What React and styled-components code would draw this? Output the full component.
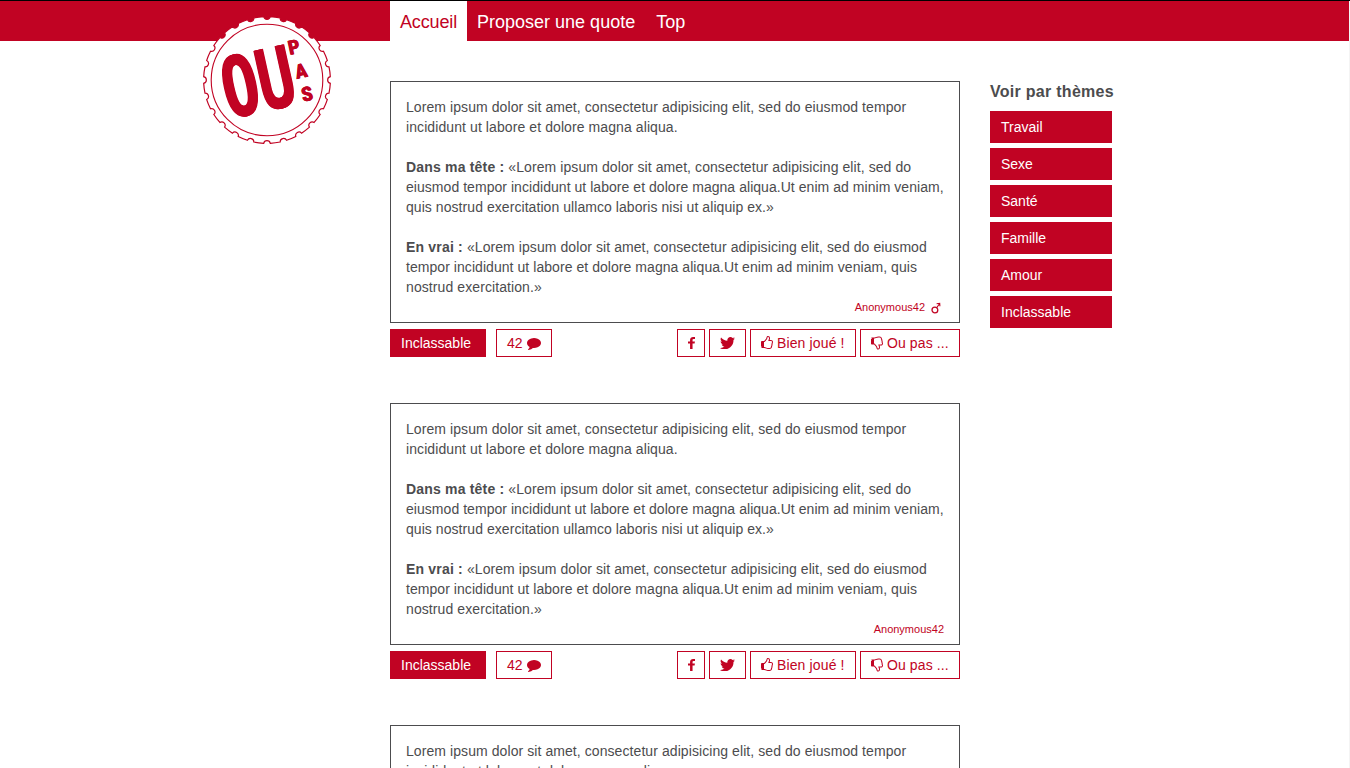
import React from "react";
import styled, { createGlobalStyle } from "styled-components";

const RED = "#c10323";
const INK = "#4c4c4e";

const Global = createGlobalStyle`
  * { box-sizing: border-box; }
  html, body { margin: 0; height: 768px; overflow: hidden; background: #fff; }
  body {
    font-family: "Liberation Sans", Arial, Helvetica, sans-serif;
    font-size: 14px;
    line-height: 20px;
    color: ${INK};
  }
`;

const Page = styled.div`
  height: 768px;
  overflow: hidden;
  border-top: 1px solid #000;
`;

const Frame = styled.div`
  position: relative;
  height: 100%;
  border-right: 1px solid #f4f4f4;
`;

const Header = styled.header`
  height: 40px;
  padding-left: 390px;
  background: ${RED};
`;

const Nav = styled.nav`
  display: flex;
  height: 40px;
`;

const NavLink = styled.a`
  padding: 0 10px;
  font-size: 18px;
  line-height: 42px;
  letter-spacing: ${(p) => p.$track || 0}px;
  color: ${(p) => (p.$active ? RED : "#fff")};
  background: ${(p) => (p.$active ? "#fff" : "transparent")};
  margin-right: ${(p) => p.$gap || 0}px;
`;

const LogoBadge = styled.a`
  position: absolute;
  left: 202px;
  top: 14px;
  width: 130px;
  height: 130px;
`;

const Seal = styled.svg`
  display: block;
`;

const LogoWord = styled.span`
  position: absolute;
  left: 5.5px;
  top: 17.5px;
  width: 100px;
  font-family: "DejaVu Sans Mono", monospace;
  font-weight: 700;
  font-size: 84px;
  line-height: 100px;
  letter-spacing: -1px;
  white-space: nowrap;
  color: ${RED};
  transform: rotate(-12.5deg) scaleX(0.73);
  text-shadow: 0.8px 0 ${RED}, -0.8px 0 ${RED};
`;

const LogoLetter = styled.span`
  position: absolute;
  left: ${(p) => p.$x - 10}px;
  top: ${(p) => p.$y - 10}px;
  width: 20px;
  text-align: center;
  font-family: Roboto, "Liberation Sans", sans-serif;
  font-weight: 900;
  font-size: 20px;
  line-height: 20px;
  color: ${RED};
  transform: rotate(-12deg) scaleX(0.85);
  text-shadow: 0.5px 0 ${RED}, -0.5px 0 ${RED};
`;

const Columns = styled.div`
  display: grid;
  grid-template-columns: 570px 130px;
  column-gap: 30px;
  padding: 40px 0 0 390px;
`;

const Post = styled.article`
  margin-bottom: 46px;
`;

const Quote = styled.div`
  height: 242px;
  padding: 15px 15px 5px;
  border: 1px solid ${INK};
`;

const Paragraph = styled.p`
  margin: 0 0 ${(p) => (p.$last ? 0 : 20)}px;
`;

const Line = styled.span`
  display: block;
  white-space: nowrap;
  letter-spacing: ${(p) => p.$track}px;
`;

const Lead = styled.b`
  letter-spacing: 0.19px;
`;

const Author = styled.div`
  display: flex;
  justify-content: flex-end;
  align-items: center;
  font-size: 11px;
  color: ${RED};
`;

const Gender = styled.svg`
  margin: 2px 3px 0 6px;
`;

const Actions = styled.div`
  display: flex;
  margin-top: 6px;
  gap: 4px;
`;

const Button = styled.a`
  display: flex;
  align-items: center;
  width: ${(p) => p.$w}px;
  height: 28px;
  padding: 0 0 0 10px;
  border: 1px solid ${RED};
  color: ${(p) => (p.$solid ? "#fff" : RED)};
  background: ${(p) => (p.$solid ? RED : "#fff")};
  letter-spacing: ${(p) => p.$track || 0}px;
  white-space: pre;
`;

const Left = styled.div`
  display: flex;
  gap: 10px;
  margin-right: auto;
`;

const Glyph = styled.svg`
  fill: ${RED};
  flex: none;
  margin-right: ${(p) => p.$after || 0}px;
  margin-left: ${(p) => p.$before || 0}px;
`;

const Title = styled.h2`
  margin: 0 0 9px;
  padding-top: 1px;
  font-size: 16px;
  line-height: 20px;
  letter-spacing: 0.28px;
  white-space: nowrap;
`;

const Theme = styled.a`
  display: block;
  width: 122px;
  height: 32px;
  margin-bottom: 5px;
  padding-left: 11px;
  line-height: 32px;
  color: #fff;
  background: ${RED};
`;

const ICONS = {
  facebook:
    "M1343 12v264h-157q-86 0-116 36t-30 108v189h293l-39 296h-254v759h-306v-759h-255v-296h255v-218q0-186 104-288.500t277-102.500q147 0 228 12z",
  twitter:
    "M1684 408q-67 98-162 167 1 14 1 42 0 130-38 259.500t-115.500 248.500-184.500 210.500-258 146-323 54.500q-271 0-496-145 35 4 78 4 225 0 401-138-105-2-188-64.500t-114-159.500q33 5 61 5 43 0 85-11-112-23-185.500-111.500t-73.500-205.500v-4q68 38 146 41-66-44-105-115t-39-154q0-88 44-163 121 149 294.500 238.500t371.500 99.500q-8-38-8-74 0-134 94.500-228.500t228.500-94.500q140 0 236 102 109-21 205-78-37 115-142 178 93-10 186-50z",
  comment:
    "M1792 896q0 174-120 321.500t-326 233-450 85.500q-70 0-145-8-198 175-460 242-49 14-114 22-17 2-30.500-9t-17.500-29v-1q-3-4-.5-12t2-10 4.500-9.500l6-9 7-8.500 8-9q7-8 31-34.500t34.500-38 31-39.500 32.500-51 27-59 26-76q-157-89-247.500-220t-90.500-281q0-130 71-248.500t191-204.500 286-136.500 348-50.500q244 0 450 85.500t326 233 120 321.500z",
  thumb:
    "M256 1408q0-26-19-45t-45-19-45 19-19 45 19 45 45 19 45-19 19-45zm1280-640q0-51-39-89.500t-89-38.500h-352q0-58 48-159.500t48-160.500q0-98-32-145t-128-47q-26 26-38 85t-30.500 125.500-59.500 109.500q-22 23-77 91-4 5-23 30t-31.500 41-34.500 42.500-40 44-38.500 35.500-40 27-35.500 9h-32v640h32q13 0 31.500 3t33 6.500 38 11 35 11.500 35.500 12.500 29 10.500q211 73 342 73h121q192 0 192-167 0-26-5-56 30-16 47.500-52.500t17.500-73.500-18-69q53-50 53-119 0-25-10-55.500t-25-47.500q32-1 53.500-47t21.500-81zm128-1q0 89-49 163 9 33 9 69 0 77-38 144 3 21 3 43 0 101-60 178 1 139-85 219.500t-227 80.500h-129q-96 0-189.500-22.500t-216.500-65.500q-116-40-138-40h-288q-53 0-90.500-37.500t-37.500-90.500v-640q0-53 37.500-90.500t90.500-37.500h274q36-24 137-155 58-75 107-128 24-25 35.500-85.500t30.500-126.500 62-108q39-37 90-37 84 0 151 32.500t102 101.500 35 186q0 93-48 192h176q104 0 180 76t76 179z",
};

function Icon({ name, box = "0 0 1792 1792", w = 14, h = 14, flip, before, after }) {
  return (
    <Glyph width={w} height={h} viewBox={box} preserveAspectRatio="none" $before={before} $after={after}>
      <path d={ICONS[name]} transform={flip ? "translate(0 1664) scale(1 -1)" : undefined} />
    </Glyph>
  );
}

// Bottle-cap rim: 24 arcs separated by small scooped notches.
function rimPath(cx, cy, r) {
  const pt = (deg) => {
    const a = (deg * Math.PI) / 180;
    return `${(cx + r * Math.cos(a)).toFixed(2)} ${(cy + r * Math.sin(a)).toFixed(2)}`;
  };
  let d = `M${pt(3)}`;
  for (let i = 0; i < 24; i++) {
    const a = i * 15;
    d += ` A${r} ${r} 0 0 1 ${pt(a + 12)} A3.4 3.4 0 0 0 ${pt(a + 18)}`;
  }
  return d + "Z";
}

function Logo() {
  return (
    <LogoBadge>
      <Seal width="130" height="130" viewBox="0 0 130 130">
        <path d={rimPath(65, 65, 63.4)} fill="#fff" stroke={RED} strokeWidth="1.2" />
        <circle cx="65" cy="65" r="55.800" fill="none" stroke={RED} strokeWidth="1.1" />
      </Seal>
      <LogoWord>OU</LogoWord>
      <LogoLetter $x={92} $y={32}>P</LogoLetter>
      <LogoLetter $x={98.500} $y={56}>A</LogoLetter>
      <LogoLetter $x={104.500} $y={79}>S</LogoLetter>
    </LogoBadge>
  );
}

function QuotePost({ male }) {
  return (
    <Post>
      <Quote>
        <Paragraph>
          <Line $track={0.076}>Lorem ipsum dolor sit amet, consectetur adipisicing elit, sed do eiusmod tempor</Line>
          <Line $track={0.09}>incididunt ut labore et dolore magna aliqua.</Line>
        </Paragraph>
        <Paragraph>
          <Line $track={0.08}>
            <Lead>Dans ma tête :</Lead> «Lorem ipsum dolor sit amet, consectetur adipisicing elit, sed do
          </Line>
          <Line $track={0.046}>eiusmod tempor incididunt ut labore et dolore magna aliqua.Ut enim ad minim veniam,</Line>
          <Line $track={0.06}>quis nostrud exercitation ullamco laboris nisi ut aliquip ex.»</Line>
        </Paragraph>
        <Paragraph $last>
          <Line $track={0.075}>
            <Lead>En vrai :</Lead> «Lorem ipsum dolor sit amet, consectetur adipisicing elit, sed do eiusmod
          </Line>
          <Line $track={0.055}>tempor incididunt ut labore et dolore magna aliqua.Ut enim ad minim veniam, quis</Line>
          <Line $track={0.09}>nostrud exercitation.»</Line>
        </Paragraph>
        <Author>
          Anonymous42
          {male && (
            <Gender width="10" height="12" viewBox="0 0 10 12" fill="none" stroke={RED}>
              <circle cx="3.900" cy="8" r="2.900" strokeWidth="1.300" />
              <path d="M5.700 5.700 8.300 2M5.600 1.700 8.700 1.300 8.900 4.200" strokeWidth="1.100" />
            </Gender>
          )}
        </Author>
      </Quote>
      <Actions>
        <Left>
          <Button $solid $w={96}>Inclassable</Button>
          <Button $w={56}>
            42
            <Icon name="comment" before={4} />
          </Button>
        </Left>
        <Button $w={28}>
          <Icon name="facebook" w={7} h={12} box="479 0 864 1664" />
        </Button>
        <Button $w={37}>
          <Icon name="twitter" w={15} h={12.3} box="108 256 1576 1280" />
        </Button>
        <Button $w={106} $track={0.13}>
          <Icon name="thumb" w={13} h={14} box="0 0 1664 1792" before={-1} after={4} />
          Bien joué !
        </Button>
        <Button $w={100} $track={0.1}>
          <Icon name="thumb" w={13} h={14} box="0 -64 1664 1792" flip before={-1} after={4} />
          Ou pas ...
        </Button>
      </Actions>
    </Post>
  );
}

const THEMES = ["Travail", "Sexe", "Santé", "Famille", "Amour", "Inclassable"];

export default function App() {
  return (
    <Page>
      <Global />
      <Frame>
        <Header>
          <Nav>
            <NavLink $active $track={-0.14}>Accueil</NavLink>
            <NavLink $gap={1}>Proposer une quote</NavLink>
            <NavLink>Top</NavLink>
          </Nav>
        </Header>
        <Logo />
        <Columns>
          <main>
            <QuotePost male />
            <QuotePost />
            <QuotePost />
          </main>
          <aside>
            <Title>Voir par thèmes</Title>
            {THEMES.map((t) => (
              <Theme key={t}>{t}</Theme>
            ))}
          </aside>
        </Columns>
      </Frame>
    </Page>
  );
}
